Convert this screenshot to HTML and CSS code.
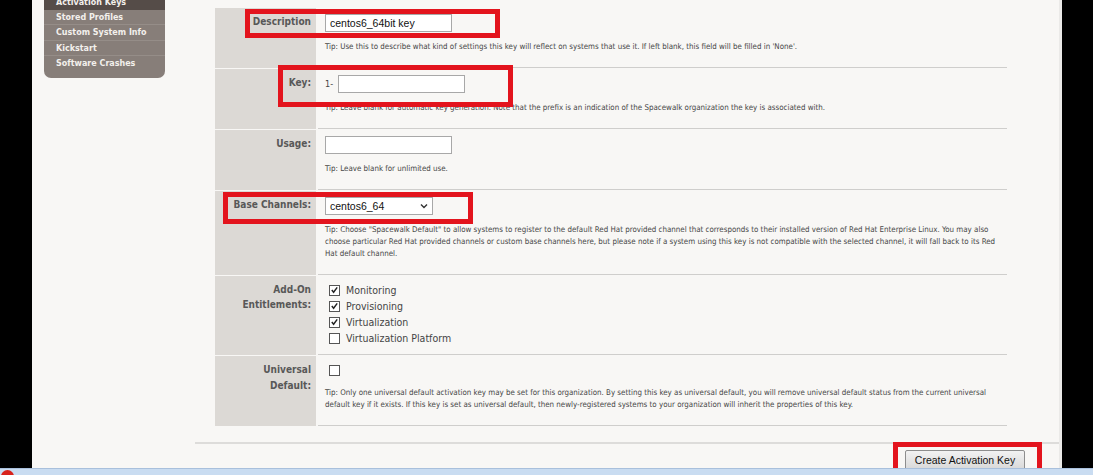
FILE: index.html
```html
<!DOCTYPE html>
<html lang="en">
<head>
<meta charset="utf-8">
<title>Create Activation Key</title>
<link rel="stylesheet" href="styles.css">
</head>
<body>
<div class="screen">
  <div class="desk">
    <div class="edge"></div>
    <div class="page">
      <nav class="sidebar">
        <ul class="nav">
          <li class="nav-item active">Activation Keys</li>
          <li class="nav-item">Stored Profiles</li>
          <li class="nav-item">Custom System Info</li>
          <li class="nav-item">Kickstart</li>
          <li class="nav-item">Software Crashes</li>
        </ul>
      </nav>
      <main class="main">
        <div class="form">
          <div class="row">
            <div class="label">Description</div>
            <div class="value">
              <div class="input">centos6_64bit key</div>
              <p class="tip">Tip: Use this to describe what kind of settings this key will reflect on systems that use it. If left blank, this field will be filled in 'None'.</p>
            </div>
            <span class="mark mark-desc"></span>
          </div>
          <div class="row">
            <div class="label">Key:</div>
            <div class="value">
              <div class="key-line"><span class="prefix">1-</span><div class="input"></div></div>
              <p class="tip">Tip: Leave blank for automatic key generation. Note that the prefix is an indication of the Spacewalk organization the key is associated with.</p>
            </div>
            <span class="mark mark-key"></span>
          </div>
          <div class="row">
            <div class="label">Usage:</div>
            <div class="value">
              <div class="input"></div>
              <p class="tip">Tip: Leave blank for unlimited use.</p>
            </div>
          </div>
          <div class="row row-base">
            <div class="label">Base Channels:</div>
            <div class="value">
              <div class="select"><span>centos6_64</span>
                <svg class="chev" width="8" height="6" viewBox="0 0 8 6"><path d="M1 1.5 L4 4.5 L7 1.5" fill="none" stroke="#333" stroke-width="1.4"/></svg>
              </div>
              <p class="tip">Tip: Choose "Spacewalk Default" to allow systems to register to the default Red Hat provided channel that corresponds to their installed version of Red Hat Enterprise Linux. You may also choose particular Red Hat provided channels or custom base channels here, but please note if a system using this key is not compatible with the selected channel, it will fall back to its Red Hat default channel.</p>
            </div>
            <span class="mark mark-base"></span>
          </div>
          <div class="row row-checks">
            <div class="label">Add-On<br>Entitlements:</div>
            <div class="value">
              <ul class="checks">
                <li class="check"><span class="cb"><svg width="10" height="10" viewBox="0 0 10 10"><path d="M2 5 L4 7.5 L8 2" fill="none" stroke="#222" stroke-width="1.6"/></svg></span>Monitoring</li>
                <li class="check"><span class="cb"><svg width="10" height="10" viewBox="0 0 10 10"><path d="M2 5 L4 7.5 L8 2" fill="none" stroke="#222" stroke-width="1.6"/></svg></span>Provisioning</li>
                <li class="check"><span class="cb"><svg width="10" height="10" viewBox="0 0 10 10"><path d="M2 5 L4 7.5 L8 2" fill="none" stroke="#222" stroke-width="1.6"/></svg></span>Virtualization</li>
                <li class="check"><span class="cb"></span>Virtualization Platform</li>
              </ul>
            </div>
          </div>
          <div class="row row-universal">
            <div class="label label-tall">Universal<br>Default:</div>
            <div class="value">
              <div class="check"><span class="cb"></span></div>
              <p class="tip">Tip: Only one universal default activation key may be set for this organization. By setting this key as universal default, you will remove universal default status from the current universal default key if it exists. If this key is set as universal default, then newly-registered systems to your organization will inherit the properties of this key.</p>
            </div>
          </div>
        </div>
        <div class="actions">
          <div class="btn-wrap">
            <button class="btn" type="button">Create Activation Key</button>
            <span class="mark mark-btn"></span>
          </div>
        </div>
      </main>
    </div>
    <div class="edge edge-right"></div>
  </div>
  <div class="taskbar"><span class="start"></span></div>
</div>
</body>
</html>
```

FILE: styles.css
```css
* { box-sizing: border-box; }
html, body { margin: 0; padding: 0; }
body {
  width: 1093px;
  height: 475px;
  overflow: hidden;
  background: #000;
  font-family: "DejaVu Sans Condensed", "DejaVu Sans", sans-serif;
  color: #444;
}
.screen { display: flex; flex-direction: column; height: 475px; }
.desk { display: flex; height: 468px; }
.edge { width: 32px; background: #000; flex: none; }
.edge-right { width: 31px; }
.page {
  width: 1030px;
  flex: none;
  background: #f8f7f5;
  border-right: 3px solid #ebeae8;
  display: flex;
  align-items: flex-start;
}

/* sidebar */
.sidebar {
  width: 121px;
  margin-left: 12px;
  background: #877e79;
  border-radius: 0 0 7px 7px;
  padding-bottom: 6px;
  overflow: hidden;
}
.nav { list-style: none; margin: -5px 0 0; padding: 0; }
.nav-item {
  height: 15.5px;
  line-height: 15.5px;
  padding-left: 12px;
  font-family: "DejaVu Sans", sans-serif;
  font-weight: bold;
  font-size: 8px;
  color: #f3f0ec;
  border-bottom: 1px solid #958d88;
  white-space: nowrap;
}
.nav-item:first-child { height: 14.5px; }
.nav-item:last-child { border-bottom: none; }
.nav-item.active { background: #554c48; border-bottom-color: #554c48; }

/* main */
.main { margin-left: 30px; flex: 1; }
.form { margin: 8px 0 0 20px; width: 792px; }
.row {
  position: relative;
  display: grid;
  grid-template-columns: 101px 1fr;
  column-gap: 2px;
  margin-bottom: 1px;
}
.row-base, .row-universal { margin-top: 1px; }
.label {
  background: #dcd9d5;
  text-align: right;
  padding: 6px 5px 0 0;
  font-weight: bold;
  font-size: 10px;
  line-height: 15px;
  color: #585858;
}
.label-tall { line-height: 16px; }
.value {
  padding: 6px 0 14px 7px;
  border-bottom: 1px solid #cfcecc;
}
.row-checks .value { padding-bottom: 8px; }

.input {
  width: 127px;
  height: 18px;
  background: #fff;
  border: 1px solid #a8a8a8;
  font-family: "Liberation Sans", Arial, sans-serif;
  font-size: 10.5px;
  line-height: 16px;
  padding-left: 4px;
  color: #111;
}
.key-line { display: flex; align-items: center; }
.prefix { font-size: 9px; color: #444; width: 13px; }
.select {
  width: 108px;
  height: 18px;
  background: #fff;
  border: 1px solid #a8a8a8;
  display: flex;
  align-items: center;
  justify-content: space-between;
  padding: 0 4px 0 4px;
  font-family: "Liberation Sans", Arial, sans-serif;
  font-size: 10.5px;
  color: #111;
}
.tip {
  margin: 9px 0 0;
  font-size: 7.9px;
  line-height: 12px;
  color: #474747;
}

.checks { list-style: none; margin: 0; padding: 0; }
.check {
  display: flex;
  align-items: center;
  height: 16px;
  font-size: 10.5px;
  color: #444;
}
.cb {
  width: 11px;
  height: 11px;
  border: 1px solid #555;
  background: #fff;
  margin: 0 6px 0 4px;
  display: flex;
  align-items: center;
  justify-content: center;
  flex: none;
}
.cb svg { display: block; }

.actions {
  margin-top: 16px;
  border-top: 2px solid #dddcda;
  padding: 5px 34px 0 0;
  display: flex;
  justify-content: flex-end;
}
.btn-wrap { position: relative; }
.btn {
  width: 120px;
  height: 20px;
  padding: 0;
  border: 1px solid #8d8d8d;
  border-radius: 2px;
  background: linear-gradient(#f2f2f2, #d9d9d9);
  font-family: "Liberation Sans", Arial, sans-serif;
  font-size: 10.5px;
  color: #111;
}

/* red annotation boxes */
.mark {
  position: absolute;
  border: 5px solid #e3141d;
  pointer-events: none;
}
.mark-desc { left: 30px; top: 1px; width: 255px; height: 29px; }
.mark-key { left: 63px; top: -4px; width: 235px; height: 42px; }
.mark-base { left: 8px; top: 1px; width: 250px; height: 32px; }
.mark-btn { left: -12px; top: -7px; width: 149px; height: 36px; }

.taskbar {
  height: 7px;
  background: #c9dcf1;
  border-top: 1px solid #a9c0dc;
  position: relative;
}
.start {
  position: absolute;
  left: 1px;
  top: 1px;
  width: 13px;
  height: 13px;
  border-radius: 50%;
  background: #d8231c;
}
```
